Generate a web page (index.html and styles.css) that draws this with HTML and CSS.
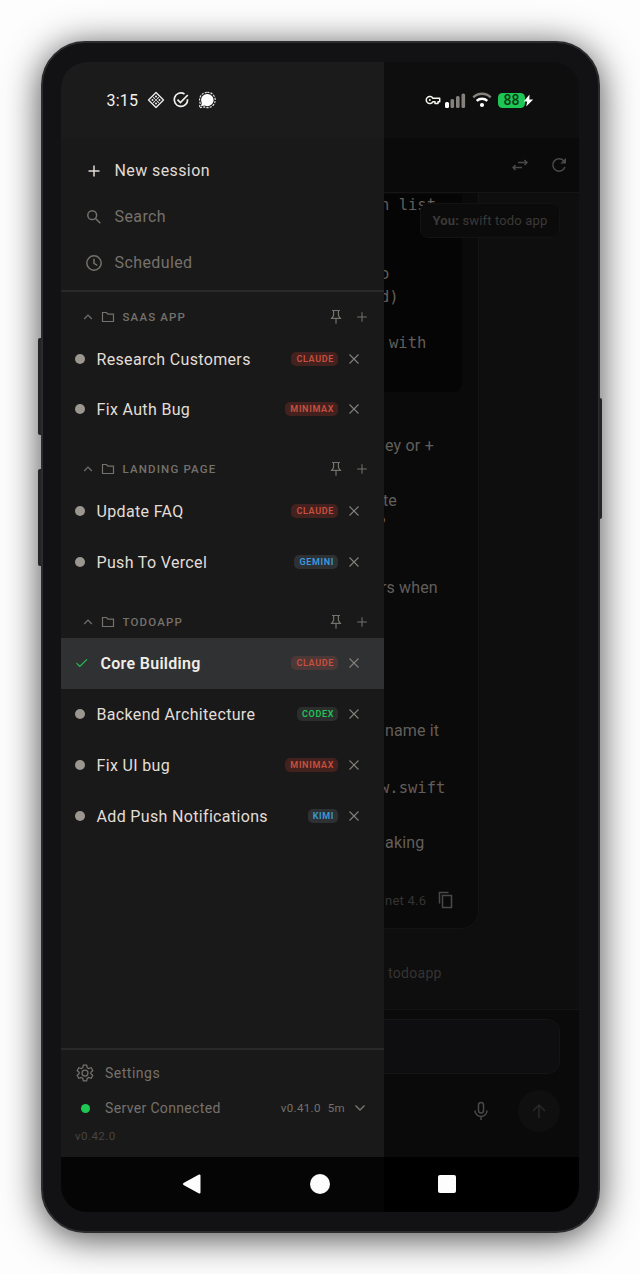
FILE: index.html
```
<!DOCTYPE html>
<html lang="en">

<head>
  <meta charset="utf-8">
  <meta name="viewport" content="width=device-width, initial-scale=1">
  <title>Sessions</title>
  <link rel="stylesheet" href="styles.css">
</head>

<body>

  <!-- shared icons -->
  <svg class="sprite" width="0" height="0">
    <symbol id="plus" viewBox="0 0 16 16"><path d="M8 2.500v11M2.500 8h11"/></symbol>
    <symbol id="close" viewBox="0 0 12 12"><path d="M1.500 1.500l9 9M10.500 1.500l-9 9"/></symbol>
    <symbol id="up" viewBox="0 0 10 10"><path d="M1.200 7L5 3.200 8.800 7"/></symbol>
    <symbol id="folder" viewBox="0 0 14 12"><path d="M1.500 1.500h4l1.400 1.600h5.600v7.400h-11z"/></symbol>
    <symbol id="pin" viewBox="0 0 12 16"><path d="M2 1.500h8M3.600 1.500v5L1.600 9.300h8.800L8.400 6.500v-5M6 9.300v5.500"/></symbol>
  </svg>

  <div class="phone">
    <span class="key vol-up"></span>
    <span class="key vol-down"></span>
    <span class="key power"></span>

    <div class="screen">

      <div class="statusbar">
        <div class="status-left">
          <span class="time">3:15</span>
          <svg class="s-diamond" viewBox="0 0 18 18" width="18" height="18">
            <path d="M9 1.500L16.500 9 9 16.500 1.500 9z" fill="none" stroke="#eee" stroke-width="1.300" stroke-linejoin="round"/>
            <g fill="#eee"><circle cx="9" cy="5.500" r="1"/><circle cx="9" cy="9" r="1"/><circle cx="9" cy="12.500" r="1"/><circle cx="5.500" cy="9" r="1"/><circle cx="12.500" cy="9" r="1"/></g>
            <path d="M6.200 6.200l1.600 1.600M11.800 6.200l-1.600 1.600M6.200 11.800l1.600-1.600M11.800 11.800l-1.600-1.600" stroke="#ddd" stroke-width="1.100"/>
          </svg>
          <svg class="s-check" viewBox="0 0 18 18" width="18" height="18" fill="none" stroke="#f2f0ec" stroke-width="1.700">
            <path d="M12.500 3A6.700 6.700 0 1 0 15.600 8.200"/>
            <path d="M5.500 8.700l2.900 2.900 7.400-7.600"/>
          </svg>
          <svg class="s-chat" viewBox="0 0 18 18" width="18" height="18">
            <path d="M9.300 2.900a6.100 6.100 0 1 1-2.700 11.500L3 15.200l.8-3.400A6.100 6.100 0 0 1 9.300 2.900z" fill="#fff"/>
            <path d="M9.300 1.300a7.700 7.700 0 1 1-3.200 14.600L1.500 16.700l.7-4.600A7.700 7.700 0 0 1 9.300 1.300z" fill="none" stroke="#ddd" stroke-width="1.200" stroke-dasharray="2.200 1.100"/>
          </svg>
        </div>
        <div class="status-right">
          <svg class="s-key" viewBox="0 0 16 10" width="16" height="10" fill="none" stroke="#f5f5f0" stroke-width="1.500">
            <path d="M8 3.300A3.600 3.600 0 1 0 8 6.700h2v1.700h3V6.700h1.700V3.300z" stroke-linejoin="round"/>
            <circle cx="4.800" cy="5" r="1" fill="#f5f5f0" stroke="none"/>
          </svg>
          <svg class="s-signal" viewBox="0 0 21 15" width="21" height="15">
            <rect x="0" y="9" width="4" height="6" rx="1.500" fill="#fff"/>
            <g fill="#85817d"><rect x="5.500" y="6" width="3.600" height="9" rx="1.500"/><rect x="11" y="3" width="3.600" height="12" rx="1.500"/><rect x="16.500" y="0.500" width="3.600" height="14.500" rx="1.500"/></g>
          </svg>
          <svg class="s-wifi" viewBox="0 0 20 16" width="20" height="16" fill="none" stroke-width="2.500">
            <path d="M1.300 5.300a12.500 12.500 0 0 1 17.400 0" stroke="#85817d"/>
            <path d="M4.700 8.900a7.800 7.800 0 0 1 10.600 0" stroke="#fff"/>
            <circle cx="10" cy="13" r="2.100" fill="#fff"/>
          </svg>
          <span class="battery">88</span>
          <svg class="s-bolt" viewBox="0 0 11 13" width="11" height="13"><path d="M6.500.5L.7 7.400h3.500L3.200 12.500l7-7.100H6.400z" fill="#fff"/></svg>
        </div>
      </div>

      <div class="main">

        <div class="drawer">
          <div class="menu">
            <div class="menu-item active">
              <svg class="line" width="16" height="16"><use href="#plus"/></svg>
              <span>New session</span>
            </div>
            <div class="menu-item">
              <svg class="line" viewBox="0 0 16 16" width="16" height="16"><circle cx="6.200" cy="6.200" r="4.400"/><path d="M9.500 9.500l4.800 4.800"/></svg>
              <span>Search</span>
            </div>
            <div class="menu-item">
              <svg class="line clock" viewBox="0 0 18 18" width="18" height="18"><circle cx="9" cy="9" r="7.200"/><path d="M9 4.800V9.300l3.200 2"/></svg>
              <span>Scheduled</span>
            </div>
          </div>

          <div class="sessions">
            <div class="group-head">
              <svg class="line" width="10" height="10"><use href="#up"/></svg>
              <svg class="line folder" width="14" height="12"><use href="#folder"/></svg>
              <span class="group-name">SAAS APP</span>
              <svg class="line" width="12" height="16"><use href="#pin"/></svg>
              <svg class="line add" width="14" height="14"><use href="#plus"/></svg>
            </div>
            <div class="session">
              <i class="dot"></i>
              <span class="name">Research Customers</span>
              <span class="badge red">CLAUDE</span>
              <svg class="line" width="12" height="12"><use href="#close"/></svg>
            </div>
            <div class="session">
              <i class="dot"></i>
              <span class="name">Fix Auth Bug</span>
              <span class="badge red">MINIMAX</span>
              <svg class="line" width="12" height="12"><use href="#close"/></svg>
            </div>

            <div class="group-head">
              <svg class="line" width="10" height="10"><use href="#up"/></svg>
              <svg class="line folder" width="14" height="12"><use href="#folder"/></svg>
              <span class="group-name">LANDING PAGE</span>
              <svg class="line" width="12" height="16"><use href="#pin"/></svg>
              <svg class="line add" width="14" height="14"><use href="#plus"/></svg>
            </div>
            <div class="session">
              <i class="dot"></i>
              <span class="name">Update FAQ</span>
              <span class="badge red">CLAUDE</span>
              <svg class="line" width="12" height="12"><use href="#close"/></svg>
            </div>
            <div class="session">
              <i class="dot"></i>
              <span class="name">Push To Vercel</span>
              <span class="badge blue">GEMINI</span>
              <svg class="line" width="12" height="12"><use href="#close"/></svg>
            </div>

            <div class="group-head">
              <svg class="line" width="10" height="10"><use href="#up"/></svg>
              <svg class="line folder" width="14" height="12"><use href="#folder"/></svg>
              <span class="group-name">TODOAPP</span>
              <svg class="line" width="12" height="16"><use href="#pin"/></svg>
              <svg class="line add" width="14" height="14"><use href="#plus"/></svg>
            </div>
            <div class="session selected">
              <svg class="done" viewBox="0 0 14 10" width="14" height="10"><path d="M1.500 5.200l3.300 3.300L12 1.300"/></svg>
              <span class="name">Core Building</span>
              <span class="badge red">CLAUDE</span>
              <svg class="line" width="12" height="12"><use href="#close"/></svg>
            </div>
            <div class="session">
              <i class="dot"></i>
              <span class="name">Backend Architecture</span>
              <span class="badge green">CODEX</span>
              <svg class="line" width="12" height="12"><use href="#close"/></svg>
            </div>
            <div class="session">
              <i class="dot"></i>
              <span class="name">Fix UI bug</span>
              <span class="badge red">MINIMAX</span>
              <svg class="line" width="12" height="12"><use href="#close"/></svg>
            </div>
            <div class="session">
              <i class="dot"></i>
              <span class="name">Add Push Notifications</span>
              <span class="badge blue">KIMI</span>
              <svg class="line" width="12" height="12"><use href="#close"/></svg>
            </div>
          </div>

          <div class="drawer-foot">
            <div class="foot-row">
              <svg class="line" viewBox="0 0 24 24" width="20" height="20"><path d="M10 2.500h4l.6 3 1.800 1.100 3-1 2 3.400-2.300 2v2l2.300 2-2 3.400-3-1-1.800 1.100-.6 3h-4l-.6-3-1.800-1.100-3 1-2-3.400 2.300-2v-2l-2.300-2 2-3.400 3 1 1.800-1.100z"/><circle cx="12" cy="12" r="3.600"/></svg>
              <span>Settings</span>
            </div>
            <div class="foot-row server">
              <i class="online"></i>
              <span>Server Connected</span>
              <span class="ver">v0.41.0</span>
              <span class="ago">5m</span>
              <svg class="line" viewBox="0 0 12 8" width="12" height="8"><path d="M1.500 1.500L6 6l4.500-4.500"/></svg>
            </div>
            <div class="build">v0.42.0</div>
          </div>
        </div>

        <!-- chat, dimmed behind the drawer -->
        <div class="chat">
          <div class="chat-head">
            <svg viewBox="0 0 16 12" width="16" height="12"><path d="M6 3.500h9M12.500 1l2.500 2.500L12.500 6M10 8.500H1M3.500 6L1 8.500 3.500 11"/></svg>
            <svg viewBox="0 0 16 16" width="16" height="16"><path d="M13.900 10A6.200 6.200 0 1 1 12.700 3.800L14 5.200"/><path class="tip" d="M15 .8v5.700H9.300z"/></svg>
          </div>

          <div class="messages">
            <div class="you"><b>You:</b> swift todo app</div>
            <div class="answer">
              <div class="code">
                <p class="cut">n list</p>
                <p></p>
                <p></p>
                <p class="cut">o</p>
                <p class="cut">d)</p>
                <p></p>
                <p class="indent">with</p>
              </div>
              <p class="l1">ey or +</p>
              <p class="l2">te</p>
              <p class="l3">?</p>
              <p class="l4">rs when</p>
              <p class="l5">name it</p>
              <p class="l6">w.swift</p>
              <p class="l7">aking</p>
              <div class="meta">
                <span>net 4.6</span>
                <svg viewBox="0 0 16 18" width="16" height="18"><path d="M1.500 12.500v-11h9"/><path d="M4.500 4.500h9v12h-9z"/></svg>
              </div>
            </div>
            <div class="path">todoapp</div>
          </div>

          <div class="composer">
            <div class="input"></div>
            <div class="actions">
              <svg viewBox="0 0 16 20" width="16" height="20"><rect x="5.500" y="1.500" width="5" height="10.500" rx="2.500"/><path d="M2 9.500a6 6 0 0 0 12 0M8 15.500v3.500"/></svg>
              <div class="send">
                <svg viewBox="0 0 16 16" width="16" height="16"><path d="M8 15V2M2 8l6-6 6 6"/></svg>
              </div>
            </div>
          </div>
        </div>
      </div>

      <div class="navbar">
        <svg viewBox="0 0 20 20" width="20" height="20"><path d="M17.500 1.500v17L2 10z" fill="#fdfdfd" stroke="#fdfdfd" stroke-width="2" stroke-linejoin="round"/></svg>
        <span class="home"></span>
        <span class="recent"></span>
      </div>
    </div>
  </div>

</body>

</html>
```

FILE: styles.css
```
* {
  box-sizing: border-box;
}

body {
  margin: 0;
  height: 1274px;
  padding: 41px;
  background: #fdfdfd;
  font-family: Roboto, "Liberation Sans", sans-serif;
  overflow: hidden;
}

p {
  margin: 0;
}

svg {
  flex-shrink: 0;
}

.sprite {
  display: none;
}

/* phone body */
.phone {
  position: relative;
  width: 558.5px;
  height: 1192px;
  padding: 19px 19px 19px 18px;
  border: 2px solid #2c2c2e;
  border-radius: 44px;
  background: #121214;
  box-shadow: 0 5px 36px rgba(0, 0, 0, 0.72);
}

.key {
  position: absolute;
  width: 3px;
  background: #242427;
}

.vol-up {
  left: -5px;
  top: 295px;
  height: 97px;
  border-radius: 2px 0 0 2px;
}

.vol-down {
  left: -5px;
  top: 426px;
  height: 97px;
  border-radius: 2px 0 0 2px;
}

.power {
  right: -4px;
  top: 355px;
  height: 121px;
  border-radius: 0 2px 2px 0;
}

.screen {
  display: flex;
  flex-direction: column;
  width: 517.5px;
  height: 1150px;
  border-radius: 26px;
  overflow: hidden;
  background: #0e0e0e;
}

/* status bar */
.statusbar {
  display: flex;
  height: 76px;
  flex-shrink: 0;
}

.status-left,
.status-right {
  display: flex;
  align-items: center;
}

.status-left {
  width: 323px;
  padding-left: 45.5px;
  background: #1b1b1b;
}

.time {
  width: 40px;
  font-size: 16px;
  letter-spacing: 0.2px;
  color: #f5f2ed;
}

.s-check {
  margin-left: 7.5px;
}

.s-chat {
  margin-left: 7.5px;
}

.status-right {
  flex: 1;
  padding-left: 41px;
}

.s-signal {
  margin-left: 4px;
}

.s-wifi {
  margin-left: 6px;
}

.battery {
  width: 27px;
  height: 15px;
  margin-left: 6px;
  border-radius: 4.5px;
  background: #1ec755;
  color: #0c3b19;
  font-size: 14px;
  font-weight: 500;
  line-height: 15.5px;
  text-align: center;
}

.s-bolt {
  margin-left: -2px;
}

.main {
  display: flex;
  height: 1019px;
  flex-shrink: 0;
}

/* drawer */
.drawer {
  display: flex;
  flex-direction: column;
  width: 323px;
  background: #191919;
  color: #75716c;
}

.line {
  fill: none;
  stroke: currentColor;
  stroke-width: 1.5;
}

.menu {
  height: 154px;
  padding-top: 9.5px;
  border-bottom: 2px solid #292929;
}

.menu-item {
  display: flex;
  align-items: center;
  height: 46px;
  padding-left: 24.5px;
  font-size: 16px;
  letter-spacing: 0.4px;
}

.menu-item svg {
  margin-right: 13px;
}

.menu-item .clock {
  margin: 0 12px 0 -1px;
}

.menu-item.active {
  color: #e0dcd5;
}

.sessions {
  flex: 1;
}

.group-head {
  display: flex;
  align-items: center;
  height: 50.8px;
  padding: 18px 15px 0 22px;
}

.group-head:first-child {
  height: 41.2px;
  padding-top: 9px;
}

.group-head .line {
  stroke-width: 1.2;
}

.folder {
  margin: 0 7.5px 0 8px;
}

.group-name {
  flex: 1;
  font-size: 11.5px;
  font-weight: 500;
  letter-spacing: 1.15px;
}

.add {
  margin-left: 13px;
}

.session {
  display: flex;
  align-items: center;
  height: 50.8px;
  padding: 0 24px 0 14px;
}

.session .line {
  stroke-width: 1.1;
  color: #85817b;
}

.dot {
  width: 10px;
  height: 10px;
  margin-right: 11.5px;
  border-radius: 50%;
  background: #9b9690;
}

.name {
  flex: 1;
  padding-top: 1px;
  font-size: 16px;
  letter-spacing: 0.34px;
  color: #e2ded7;
}

.selected {
  background: #303133;
}

.selected .name {
  font-weight: 600;
  letter-spacing: 0.3px;
  color: #f0ede6;
}

.done {
  margin-right: 11.5px;
  fill: none;
  stroke: #20c153;
  stroke-width: 1.2;
}

.badge {
  height: 14px;
  margin-right: 10px;
  padding: 0 4px 0 5px;
  border-radius: 5px;
  font-size: 9px;
  font-weight: 600;
  line-height: 14.5px;
  letter-spacing: 0.65px;
}

.red {
  background: #43211e;
  color: #c9503f;
}

.selected .red {
  background: #4c3836;
}

.blue {
  background: #2e3134;
  color: #389bdc;
}

.green {
  background: #2b2e2d;
  color: #1fc555;
}

.drawer-foot {
  height: 109px;
  padding-top: 5.5px;
  border-top: 2px solid #292929;
}

.foot-row {
  display: flex;
  align-items: center;
  height: 35px;
  padding: 0 18px 0 14px;
  font-size: 14px;
  letter-spacing: 0.5px;
}

.foot-row .line {
  margin-right: 10px;
}

.foot-row.server {
  letter-spacing: 0.35px;
}

.online {
  width: 9px;
  height: 9px;
  margin: 0 15px 0 6px;
  border-radius: 50%;
  background: #1fc853;
}

.ver {
  margin-left: auto;
  font-size: 11.5px;
}

.ago {
  margin: 0 9px 0 7px;
  font-size: 11.5px;
}

.server .line {
  margin: 0;
}

.build {
  padding: 3px 0 0 14px;
  font-size: 11.5px;
  letter-spacing: 0.45px;
  color: #464442;
}

/* chat */
.chat {
  display: flex;
  flex-direction: column;
  flex: 1;
  min-width: 0;
  background: #0e0e0e;
  overflow: hidden;
}

.chat svg {
  fill: none;
  stroke: #4b4948;
  stroke-width: 1.5;
}

.chat .tip {
  fill: #4b4948;
  stroke: none;
}

.chat-head {
  display: flex;
  align-items: center;
  justify-content: flex-end;
  gap: 23px;
  height: 55px;
  padding-right: 12px;
  border-bottom: 1px solid #151515;
  background: #0a0a0a;
}

.messages {
  position: relative;
  height: 816px;
  font-size: 16px;
  line-height: 23px;
  color: #625e5a;
  white-space: nowrap;
}

/* the last prompt stays pinned over the answer */
.you {
  position: absolute;
  top: 10px;
  right: 18.5px;
  width: 140px;
  height: 35px;
  border: 1px solid #131313;
  border-radius: 8px;
  background: #0b0b0b;
  color: #3b3938;
  font-size: 13px;
  line-height: 33px;
  letter-spacing: 0.15px;
  text-align: center;
}

.answer {
  width: 95px;
  height: 736px;
  padding-top: 1px;
  border: 1px solid #131313;
  border-width: 0 1px 1px 0;
  border-radius: 0 0 18px 0;
  background: #0a0a0a;
}

.code {
  width: 78px;
  height: 198px;
  margin-bottom: 42px;
  border-radius: 0 0 8px 0;
  background: #050505;
}

.code p,
.l6 {
  height: 23px;
  font-family: "DejaVu Sans Mono", monospace;
  font-size: 15.5px;
}

.cut {
  margin-left: -4px;
}

.indent {
  margin-left: 5px;
}

.l1 {
  margin-left: 1px;
  letter-spacing: 0.2px;
}

.l2 {
  margin: 32px 0 0 -1px;
}

.l3 {
  margin-left: -6px;
}

.l4 {
  margin: 41px 0 0 -3px;
  letter-spacing: 0.15px;
}

.l5 {
  margin: 120px 0 0 1px;
  letter-spacing: 0.15px;
}

.l6 {
  margin: 35px 0 0 -4px;
}

.l7 {
  margin: 31px 0 0 1px;
  letter-spacing: 0.2px;
}

.meta {
  display: flex;
  align-items: center;
  justify-content: space-between;
  height: 24px;
  margin-top: 34px;
  padding: 0 24px 0 1px;
  font-size: 13px;
  letter-spacing: 0.25px;
  color: #363432;
}

.path {
  margin: 33px 0 0 4px;
  font-size: 14px;
  letter-spacing: 0.3px;
  color: #363432;
}

.composer {
  height: 148px;
  padding-top: 9px;
  border-top: 1px solid #141414;
  background: #0a0a0a;
}

.input {
  height: 55px;
  margin-right: 18.5px;
  border: 1px solid #151515;
  border-left: 0;
  border-radius: 0 13px 13px 0;
  background: #0e0e10;
}

.actions {
  display: flex;
  align-items: center;
  justify-content: flex-end;
  gap: 29px;
  margin: 15.5px 18.5px 0 0;
}

.send {
  display: flex;
  align-items: center;
  justify-content: center;
  width: 42px;
  height: 42px;
  border-radius: 50%;
  background: #0f0f0f;
}

.chat .send svg {
  stroke: #292929;
}

/* android navigation */
.navbar {
  display: flex;
  align-items: center;
  justify-content: center;
  gap: 108px;
  height: 55px;
  padding: 0 1px 1px 0;
  background: linear-gradient(to right, #050505 323px, #000 323px);
}

.home {
  width: 20px;
  height: 20px;
  border-radius: 50%;
  background: #fdfdfd;
}

.recent {
  width: 18px;
  height: 18px;
  border-radius: 2px;
  background: #fdfdfd;
}
```
